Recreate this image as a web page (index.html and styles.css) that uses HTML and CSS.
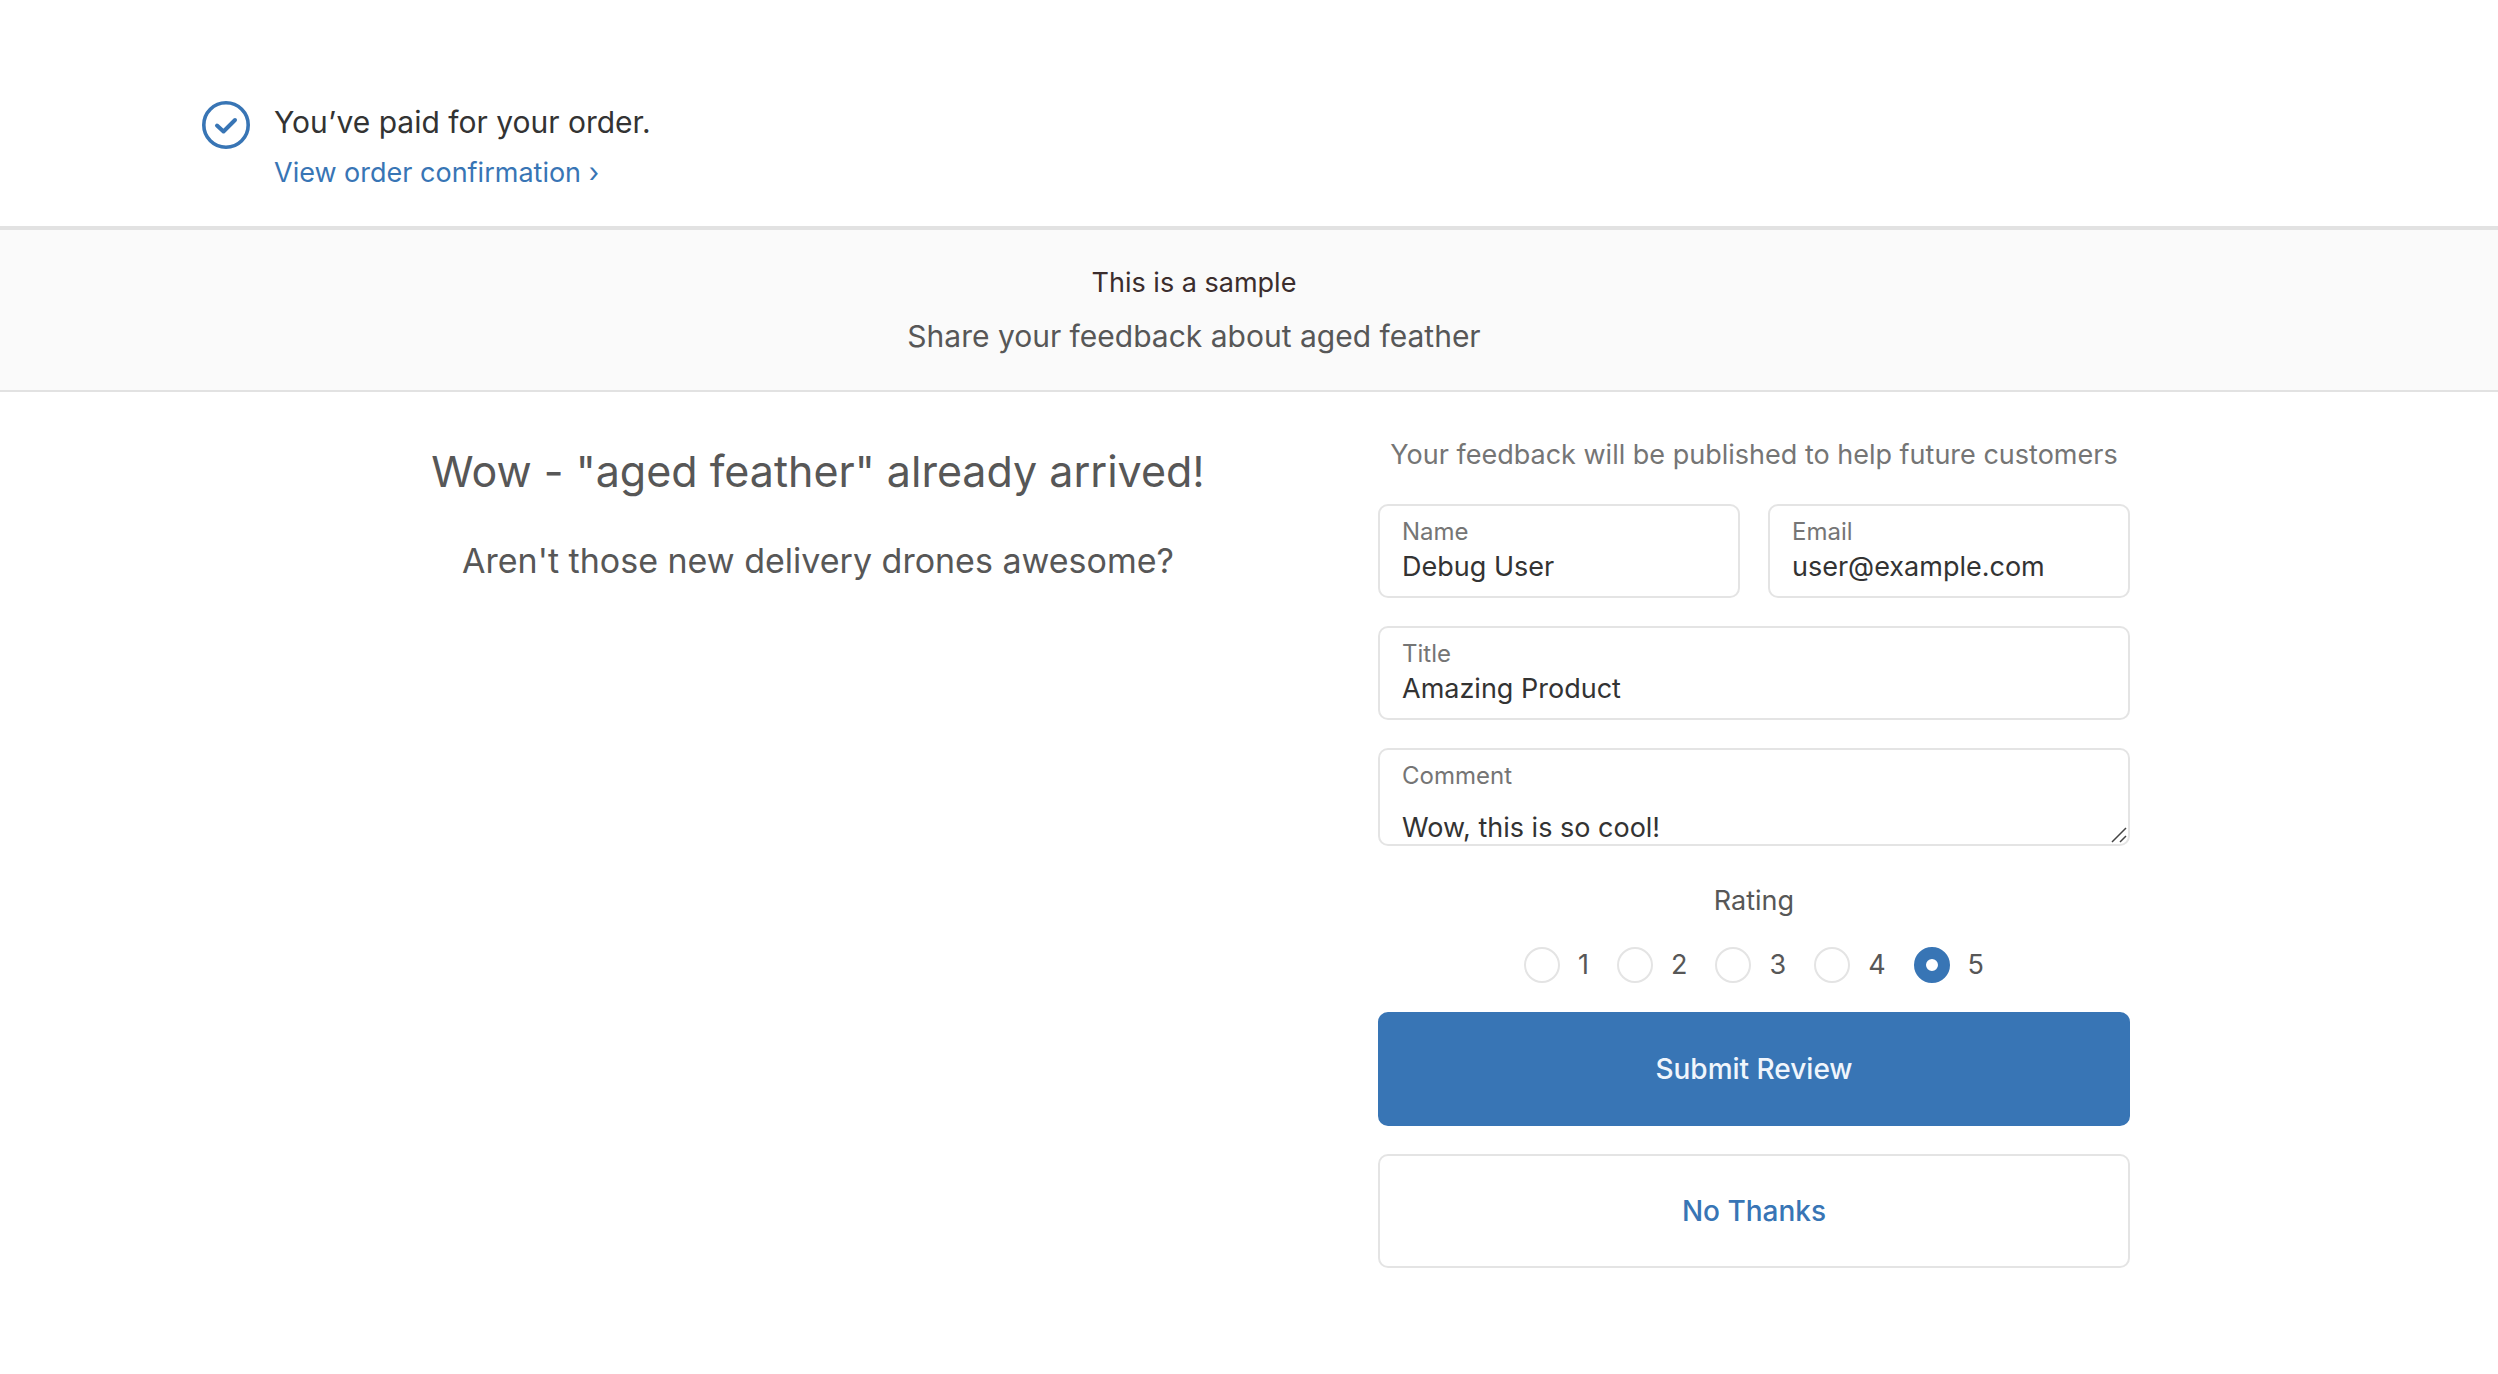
FILE: index.html
```html
<!DOCTYPE html>
<html lang="en">
<head>
<meta charset="utf-8">
<meta name="viewport" content="width=device-width, initial-scale=1">
<title>Order feedback</title>
<link rel="stylesheet" href="styles.css">
</head>
<body>
<header class="section">
  <div class="container order">
    <svg class="order-icon" viewBox="0 0 48 48" fill="none" aria-hidden="true">
      <circle cx="24" cy="24" r="22.2" stroke="currentColor" stroke-width="3.6"/>
      <path d="M15 24.500l6.500 6L33 19" stroke="currentColor" stroke-width="4" stroke-linecap="round" stroke-linejoin="round"/>
    </svg>
    <div class="order-text">
      <p class="order-status">You’ve paid for your order.</p>
      <a class="order-link" href="#">View order confirmation ›</a>
    </div>
  </div>
</header>

<section class="section banner">
  <div class="container banner-text">
    <p class="banner-note">This is a sample</p>
    <h1 class="banner-title">Share your feedback about aged feather</h1>
  </div>
</section>

<main class="section">
  <div class="container review">
    <div class="intro">
      <h2 class="intro-title">Wow - "aged feather" already arrived!</h2>
      <p class="intro-text">Aren't those new delivery drones awesome?</p>
    </div>

    <form class="form">
      <p class="form-note">Your feedback will be published to help future customers</p>
      <div class="fields">
        <div class="field">
          <label class="field-label" for="name">Name</label>
          <input class="field-input" id="name" type="text" value="Debug User">
        </div>
        <div class="field">
          <label class="field-label" for="email">Email</label>
          <input class="field-input" id="email" type="email" value="user@example.com">
        </div>
        <div class="field field-wide">
          <label class="field-label" for="title">Title</label>
          <input class="field-input" id="title" type="text" value="Amazing Product">
        </div>
        <div class="field field-wide">
          <label class="field-label" for="comment">Comment</label>
          <textarea class="field-input field-area" id="comment" rows="1">Wow, this is so cool!</textarea>
          <svg class="grip" viewBox="0 0 16 16" fill="none" aria-hidden="true">
            <path d="M1 15L15 1M9 15l6-6" stroke="currentColor" stroke-width="1.500"/>
          </svg>
        </div>
      </div>
      <fieldset class="rating">
        <legend class="rating-title">Rating</legend>
        <div class="rating-row">
          <label class="rating-option"><input class="radio" type="radio" name="rating" value="1">1</label>
          <label class="rating-option"><input class="radio" type="radio" name="rating" value="2">2</label>
          <label class="rating-option"><input class="radio" type="radio" name="rating" value="3">3</label>
          <label class="rating-option"><input class="radio" type="radio" name="rating" value="4">4</label>
          <label class="rating-option"><input class="radio" type="radio" name="rating" value="5" checked>5</label>
        </div>
      </fieldset>
      <div class="actions">
        <button class="button button-primary" type="submit">Submit Review</button>
        <button class="button" type="button">No Thanks</button>
      </div>
    </form>
  </div>
</main>
</body>
</html>
```
FILE: styles.css
```css
:root {
  --blue: #3875b5;
  --line: #e4e4e4;
  --ink: #333;
  --body: #575757;
  --muted: #757575;
}

* {
  box-sizing: border-box;
}

body {
  margin: 0;
  background: #fff;
  color: var(--body);
  font-family: Inter, "Liberation Sans", sans-serif;
  font-size: 27px;
  line-height: 42px;
}

p, h1, h2 {
  margin: 0;
  font-weight: 400;
}

.section {
  padding-right: 110px;
}

.container {
  max-width: 1984px;
  margin: 0 auto;
}

.order {
  display: flex;
  gap: 24px;
  padding: 101px 0 32px;
}

.order-icon {
  flex: none;
  width: 48px;
  height: 48px;
  color: var(--blue);
}

.order-text {
  display: flex;
  flex-direction: column;
  gap: 9px;
}

.order-status {
  color: var(--ink);
  font-size: 30px;
}

.order-link {
  color: var(--blue);
  text-decoration: none;
}

.banner {
  border-top: 4px solid #e2e2e2;
  border-bottom: 2px solid #e2e2e2;
  background: #fafafa;
}

.banner-text {
  display: flex;
  flex-direction: column;
  gap: 11px;
  padding: 32px 0 33px;
  text-align: center;
}

.banner-note {
  color: #3b2d2d;
}

.banner-title {
  font-size: 30px;
}

.review {
  display: grid;
  grid-template-columns: minmax(0, 70fr) minmax(0, 47fr);
  padding: 42px 56px;
}

.intro {
  display: flex;
  flex-direction: column;
  align-items: center;
  gap: 35px;
  padding-top: 7px;
  text-align: center;
}

.intro-title {
  font-size: 43px;
  line-height: 60px;
}

.intro-text {
  font-size: 34px;
  line-height: 50px;
}

.form-note {
  margin-bottom: 28px;
  color: var(--muted);
  text-align: center;
}

.fields {
  display: grid;
  grid-template-columns: minmax(0, 1fr) minmax(0, 1fr);
  gap: 28px;
}

.field {
  position: relative;
  display: flex;
  flex-direction: column;
  min-width: 0;
  border: 2px solid var(--line);
  border-radius: 10px;
}

.field-wide {
  grid-column: 1 / -1;
}

.field-label {
  padding: 10px 22px 0;
  color: var(--muted);
  font-size: 24px;
  line-height: 32px;
}

.field-input {
  display: block;
  width: 100%;
  height: 48px;
  padding: 0 22px 12px;
  border: 0;
  outline: 0;
  background: transparent;
  color: var(--ink);
  font: inherit;
  line-height: 36px;
}

.field-area {
  height: 52px;
  padding: 18px 22px 0;
  overflow: hidden;
  resize: none;
}

.grip {
  position: absolute;
  right: 1px;
  bottom: 1px;
  width: 16px;
  height: 16px;
  color: #444;
}

.rating {
  margin: 34px 0 26px;
  padding: 0;
  border: 0;
}

.rating-title {
  margin: 0 auto 22px;
  padding: 0;
}

.rating-row {
  display: flex;
  justify-content: center;
  gap: 28px;
}

.rating-option {
  display: flex;
  align-items: center;
  gap: 18px;
}

.radio {
  width: 36px;
  height: 36px;
  margin: 0;
  border: 2px solid var(--line);
  border-radius: 50%;
  background: #fff;
  appearance: none;
}

.radio:checked {
  border: 12px solid var(--blue);
}

.actions {
  display: flex;
  flex-direction: column;
  gap: 28px;
}

.button {
  padding: 34px;
  border: 2px solid var(--line);
  border-radius: 10px;
  background: #fff;
  color: var(--blue);
  font: inherit;
  font-size: 28px;
  font-weight: 500;
}

.button-primary {
  border-color: var(--blue);
  background: var(--blue);
  color: #f0f5fc;
}
```
